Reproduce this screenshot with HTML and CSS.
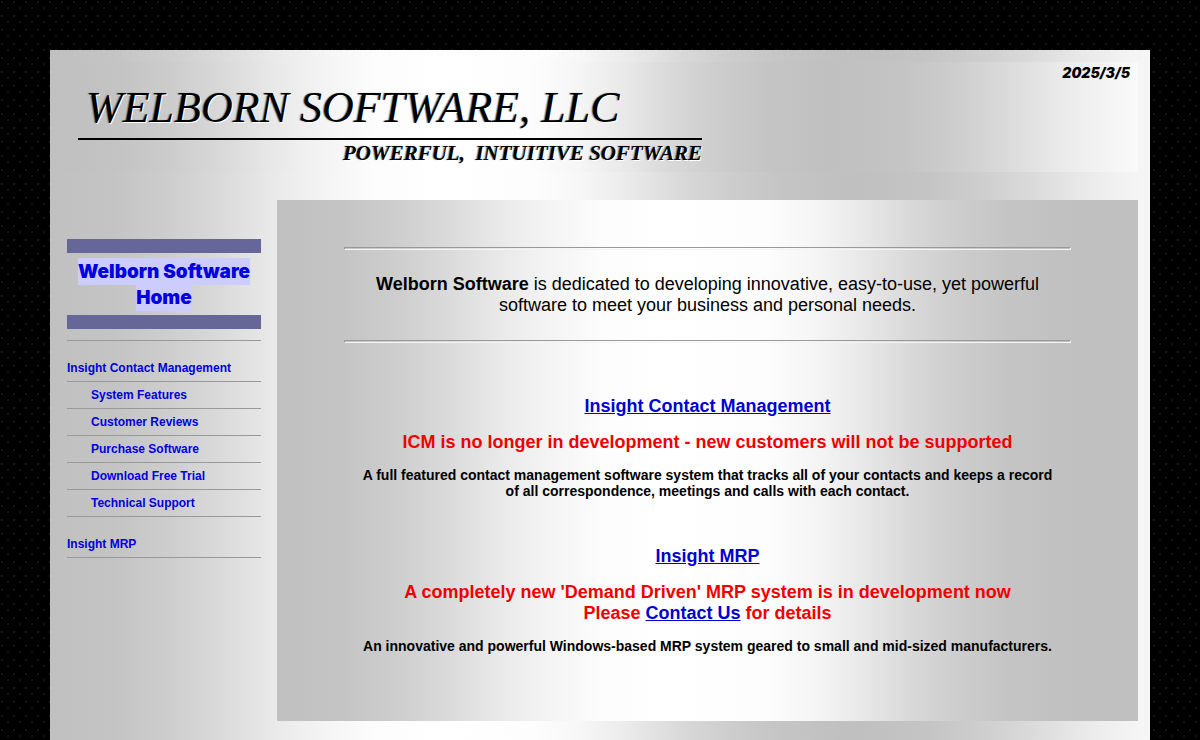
FILE: index.html
```
<!DOCTYPE html>
<html lang="en">
<head>
<meta charset="utf-8">
<title>Welborn Software</title>
<link rel="stylesheet" href="styles.css">
</head>
<body>
<div class="page">
  <header class="banner">
    <div class="brand">
      <div class="brand-name">WELBORN SOFTWARE, LLC</div>
      <div class="brand-tag">POWERFUL,&nbsp; INTUITIVE SOFTWARE</div>
    </div>
    <time class="date" datetime="2025-03-05">2025/3/5</time>
  </header>
  <div class="columns">
    <nav class="sidebar">
      <div class="home"><a href="#">Welborn Software Home</a></div>
      <ul class="menu">
        <li class="section"><a href="#">Insight Contact Management</a></li>
        <li class="sub"><a href="#">System Features</a></li>
        <li class="sub"><a href="#">Customer Reviews</a></li>
        <li class="sub"><a href="#">Purchase Software</a></li>
        <li class="sub"><a href="#">Download Free Trial</a></li>
        <li class="sub"><a href="#">Technical Support</a></li>
        <li class="section"><a href="#">Insight MRP</a></li>
      </ul>
    </nav>
    <main class="content">
      <hr class="rule">
      <p class="intro"><strong>Welborn Software</strong> is dedicated to developing innovative, easy-to-use, yet powerful software to meet your business and personal needs.</p>
      <hr class="rule">
      <section class="product">
        <h2 class="title"><a href="#">Insight Contact Management</a></h2>
        <p class="notice">ICM is no longer in development - new customers will not be supported</p>
        <p class="detail">A full featured contact management software system that tracks all of your contacts and keeps a record of all correspondence, meetings and calls with each contact.</p>
      </section>
      <section class="product">
        <h2 class="title"><a href="#">Insight MRP</a></h2>
        <p class="notice">A completely new 'Demand Driven' MRP system is in development now<br>Please <a href="#">Contact Us</a> for details</p>
        <p class="detail">An innovative and powerful Windows-based MRP system geared to small and mid-sized manufacturers.</p>
      </section>
    </main>
  </div>
</div>
</body>
</html>
```
FILE: styles.css
```
:root {
  --metal: linear-gradient(to right, #c0c0c0 0%, #c4c4c4 8%, #cecece 15%, #dadada 21%, #e8e8e8 27%, #f3f3f3 33%, #fcfcfc 40%, #fff 48%, #fdfdfd 60%, #f6f6f6 66%, #e9e9e9 72%, #d9d9d9 78%, #cdcdcd 84%, #c5c5c5 90%, #c0c0c0 98%);
}
body {
  margin: 0;
  padding: 50px 50px 0;
  background-color: #000;
  background-image:
    radial-gradient(circle at 2px 2px, #555 0, transparent 1px),
    radial-gradient(circle at 8px 8px, #484848 0, transparent 1px);
  background-size: 12px 14px;
  font-family: Arial, "Liberation Sans", sans-serif;
}
.page {
  box-sizing: border-box;
  min-height: calc(100vh - 50px);
  padding: 12px 12px 32px;
  background: var(--metal) 0 0 / 810px 100%;
}
.banner {
  display: flex;
  justify-content: space-between;
  align-items: flex-start;
  height: 110px;
  padding: 0 8px 0 16px;
  box-sizing: border-box;
  background: var(--metal) 0 0 / 780px 100%;
}
.brand {
  flex: 0 1 624px;
  padding-top: 20px;
  font-family: "Liberation Serif", serif;
  font-style: italic;
  color: #000;
  text-shadow: 1px 1px 0 #fff, -1px 0 1px #777;
  white-space: nowrap;
}
.brand-name {
  padding: 4px 0 8px 8px;
  border-bottom: 2px solid #000;
  font-size: 44px;
  line-height: 44px;
}
.brand-tag {
  text-align: right;
  font-size: 21px;
  line-height: 26px;
  font-weight: bold;
}
.date {
  padding-top: 2px;
  font: italic 900 14px/18px Inter, sans-serif;
}
.columns {
  display: flex;
  align-items: flex-start;
  margin-top: 28px;
}
.sidebar {
  flex: 0 0 194px;
  padding: 39px 16px 0 5px;
}
.home {
  padding: 6px 0 4px;
  border: solid #669;
  border-width: 14px 0;
  text-align: center;
  font: 900 19px/26px Inter, sans-serif;
}
.home a {
  padding: 2px 0;
  background: #ccf;
}
a {
  color: #0000d4;
}
.sidebar a {
  color: #0000e0;
  text-decoration: none;
}
.menu {
  list-style: none;
  margin: 11px 0 0;
  padding: 0;
  border-top: 1px solid #999;
  font-size: 12px;
  line-height: 14px;
  font-weight: bold;
}
.menu li {
  padding: 6px 0;
  border-bottom: 1px solid #999;
}
.menu .section {
  padding-top: 20px;
}
.menu .sub {
  padding-left: 24px;
}
.content {
  flex: 1;
  box-sizing: border-box;
  min-height: 521px;
  padding: 47px 67px 66px;
  background: var(--metal) 0 0 / 810px 100%;
  background-repeat: no-repeat;
  background-color: #c0c0c0;
  text-align: center;
}
.rule {
  height: 1px;
  margin: 0;
  border: 1px solid;
  border-color: #999 #f4f4f4 #f4f4f4 #999;
}
.intro {
  margin: 24px 0 24px;
  font-size: 18px;
  line-height: 21px;
}
.product {
  padding-top: 53px;
}
.product p,
.title {
  margin: 0 0 15px;
  font-size: 18px;
  line-height: 21px;
  font-weight: bold;
}
.product .notice {
  margin-bottom: 14px;
  color: #f00000;
}
.product .detail {
  margin: 0;
  padding: 0 12px;
  font-size: 14px;
  line-height: 16px;
}
.product + .product {
  padding-top: 47px;
}
```
